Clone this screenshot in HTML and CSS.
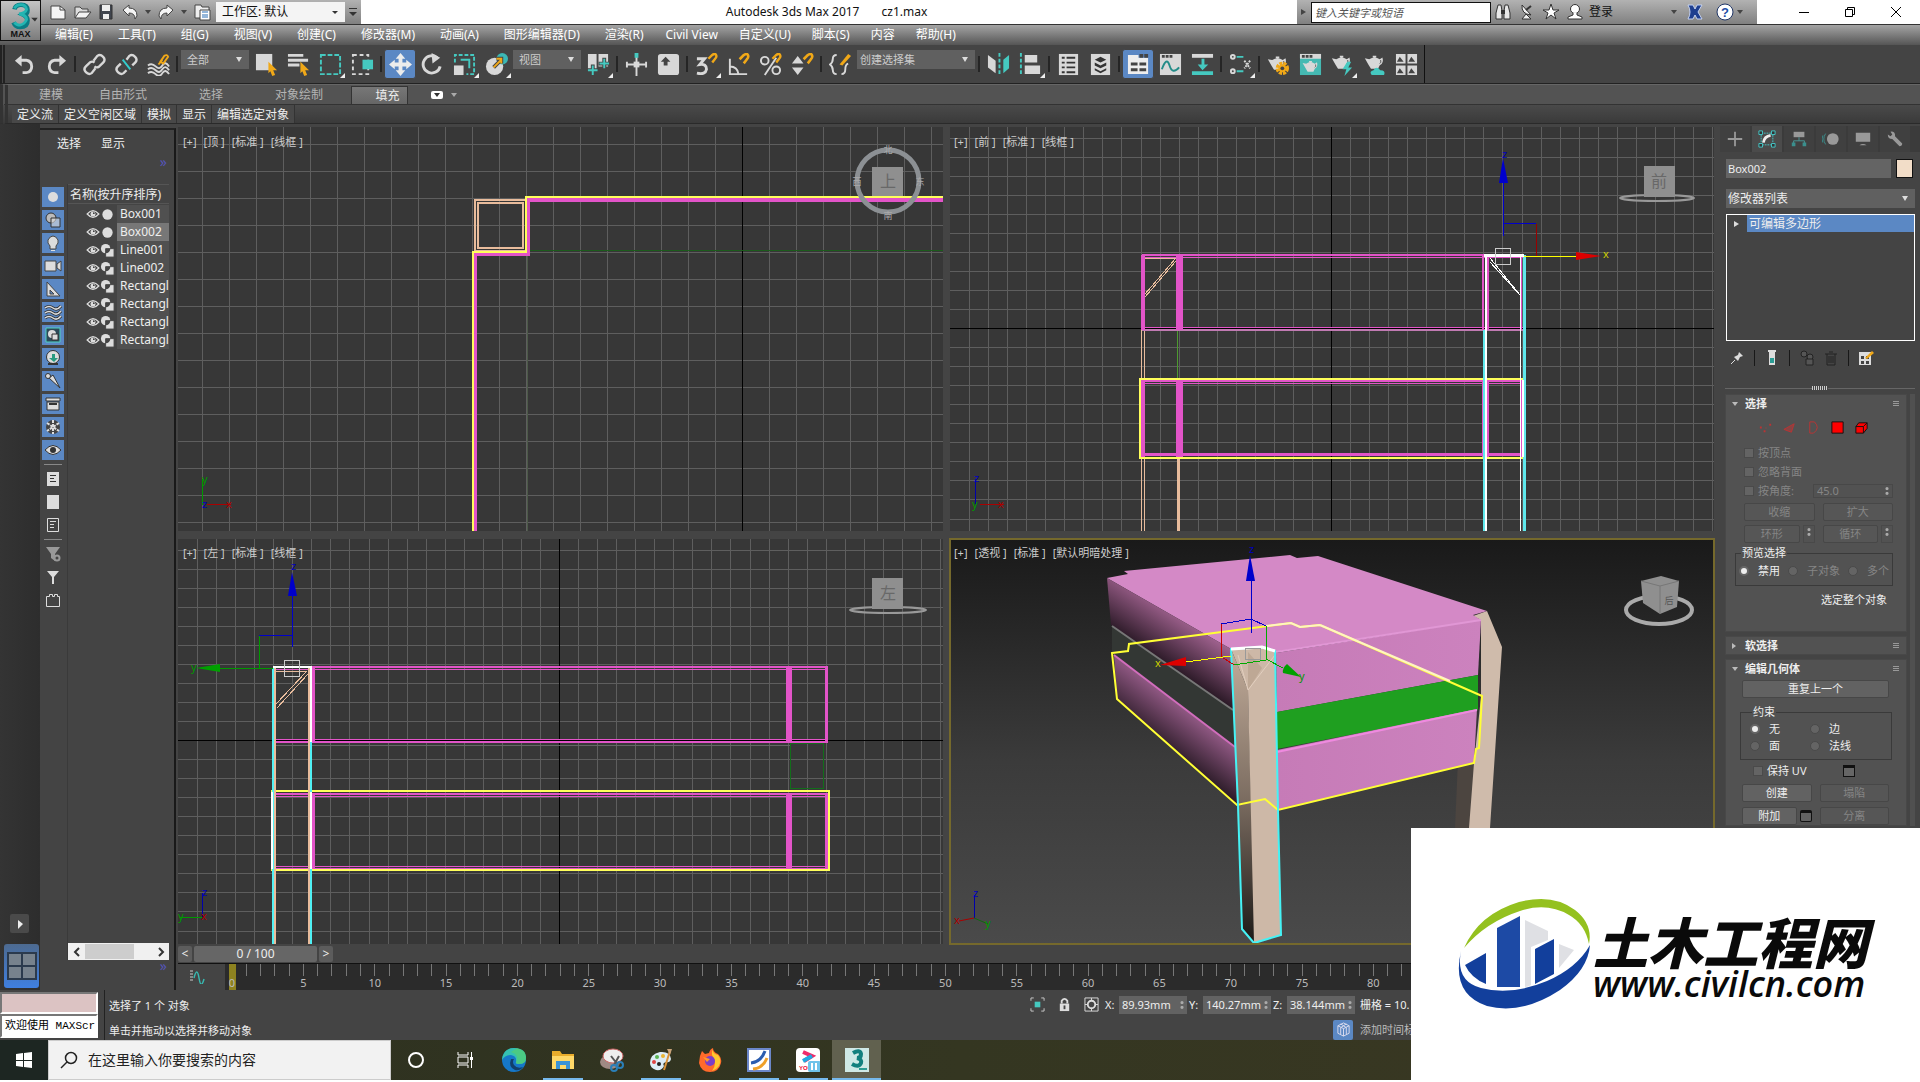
FILE: index.html
```html
<!DOCTYPE html>
<html lang="zh-CN">
<head>
	<meta charset="UTF-8">
	<meta name="viewport" content="width=device-width, initial-scale=1.0">
	<title>Autodesk 3ds Max 2017</title>
	<link rel="stylesheet" href="styles.css">
</head>
<body>
<!-- 公用图标 -->
<svg class="defs" width="0" height="0">
	<symbol id="eye" viewBox="0 0 16 12"><path d="M1 6Q8-2 15 6Q8 14 1 6z" fill="none" stroke="#ddd" stroke-width="1.5"/><circle cx="8" cy="6" r="3" fill="#ddd"/><circle cx="9" cy="5" r="1" fill="#333"/></symbol>
	<symbol id="geo" viewBox="0 0 16 16"><circle cx="8" cy="8" r="5.500" fill="#ddd"/></symbol>
	<symbol id="shape" viewBox="0 0 16 16"><circle cx="6" cy="6" r="5" fill="#ddd"/><path d="M6 6h9v9H6z" fill="#ddd" stroke="#444"/><path d="M6 6h5a5 5 0 0 1-5 5z" fill="#444"/></symbol>
	<symbol id="teapot" viewBox="0 0 24 24"><path d="M1 6l5 1q6-4 12 0l3-2q2 6-3 9l-2 4H8l-3-5zM10 3h4v2h-4z" fill="#d8d8d8"/><path d="M19 8q1 3-1 4" fill="none" stroke="#444"/></symbol>
	<symbol id="magnet" viewBox="0 0 12 12"><path d="M2 6l4-4q3-2 4 0t-1 4L6 10" fill="none" stroke="#f0a818" stroke-width="2.500"/></symbol>
</svg>

<div class="app">
	<header class="title-bar">
		<button class="app-button" aria-label="MAX">
			<svg width="40" height="42" viewBox="0 0 40 42"><path d="M13 9Q14 4 20 4q7 0 7 6 0 4-4 5 4 2 4 6 0 7-8 7-5 0-7-5" fill="none" stroke="#0b7c84" stroke-width="5"/><path d="M13 8Q15 4 20 4q5 0 6 5-1 4-8 5 8 1 8 6-2 5-7 6-4 0-6-3" fill="none" stroke="#23b5b2" stroke-width="3"/><path d="M31 18h7l-3 4z" fill="#333"/></svg>
			<span>MAX</span>
		</button>
		<div class="quick-access">
			<button aria-label="新建"><svg width="20" height="20"><path d="M3 4h9l5 4v9H3z" fill="#f4f4f4" stroke="#444"/><path d="M12 4v4h5" fill="none" stroke="#444"/></svg></button>
			<button aria-label="打开"><svg width="20" height="20"><path d="M3 16V5h5l2 2h6v3" fill="#ddd" stroke="#444"/><path d="M3 16l4-6h12l-5 6z" fill="#f4f4f4" stroke="#444"/></svg></button>
			<button aria-label="保存"><svg width="20" height="20"><path d="M4 3h12v14H4z" fill="#40454e" stroke="#333"/><path d="M6 3h8v6H6zM7 12h6v5H7z" fill="#eee"/></svg></button>
			<button aria-label="撤消"><svg width="20" height="20"><path d="M3 8l6-5v3q8 0 8 8l-2 3q0-6-6-6v3z" fill="#f4f4f4" stroke="#444"/></svg></button>
			<i class="tri"></i>
			<button aria-label="重做"><svg width="20" height="20"><path d="M17 8l-6-5v3q-8 0-8 8l2 3q0-6 6-6v3z" fill="#f4f4f4" stroke="#444"/></svg></button>
			<i class="tri"></i>
			<button aria-label="项目"><svg width="20" height="20"><path d="M3 3h6l1 2h7v11H3z" fill="#eee" stroke="#444"/><path d="M8 8h10v10H8z" fill="#fff" stroke="#444"/><path d="M10 10h6M10 13h6M10 15h6" stroke="#2a6fb5"/></svg></button>
			<div class="drop workspace-drop"><select aria-label="工作区"><option>工作区: 默认</option></select></div>
			<button class="qa-more" aria-label="更多"><svg width="12" height="12"><path d="M2 2h8v1H2zM2 6h8l-4 4z" fill="#333"/></svg></button>
		</div>
		<h1 class="title"><span>Autodesk 3ds Max 2017</span><span>cz1.max</span></h1>
		<div class="info-center">
			<i class="tri-right"></i>
			<input type="text" aria-label="搜索" placeholder="键入关键字或短语">
			<button aria-label="查找"><svg width="20" height="20"><path d="M5 3h3l1 6v8H3v-6zM12 3h3l2 8v6h-6V9z" fill="#e8e8e8" stroke="#333"/><path d="M8 8h4v4H8z" fill="#333"/></svg></button>
			<button aria-label="通信"><svg width="20" height="20"><path d="M5 3q-1 9 9 10zM9 12l-4 5h9z" fill="#f2f2f2" stroke="#333"/><path d="M9 8l5-4" stroke="#333" stroke-width="2"/></svg></button>
			<button aria-label="收藏"><svg width="20" height="20"><path d="M10 2l2 6h6l-5 3 2 6-5-4-5 4 2-6-5-3h6z" fill="#fff" stroke="#333"/></svg></button>
			<button aria-label="用户"><svg width="20" height="20"><circle cx="10" cy="7" r="4.500" fill="#fff" stroke="#333"/><path d="M8 11v2l-5 2v2h14v-2l-5-2v-2" fill="#fff" stroke="#333"/></svg></button>
			<button class="sign-in">登录</button>
			<i class="tri"></i>
			<button class="exchange" aria-label="交换"><svg width="20" height="20"><path d="M3 3h5l2 4 2-4h5l-4 7 4 7h-5l-2-4-2 4H3q4-7 0-14z" fill="#1f3f8f" stroke="#c4d2f2"/></svg></button>
			<button aria-label="帮助"><svg width="20" height="20"><circle cx="10" cy="10" r="8" fill="#fff" stroke="#1f3566"/><text x="10" y="15" text-anchor="middle" class="help-mark">?</text></svg></button>
			<i class="tri"></i>
		</div>
		<div class="window-buttons">
			<button aria-label="最小化"><svg width="12" height="12"><path d="M1 6.500h10" stroke="#000"/></svg></button>
			<button aria-label="还原"><svg width="12" height="12"><path d="M1.500 3.500h7v7h-7zM3.500 3.500v-2h7v7h-2" fill="none" stroke="#000"/></svg></button>
			<button aria-label="关闭"><svg width="12" height="12"><path d="M1 1l10 10M11 1L1 11" stroke="#000"/></svg></button>
		</div>
	</header>

	<nav class="menu-bar">
		<div class="menu-group">
			<button>编辑(E)</button><button>工具(T)</button><button>组(G)</button><button>视图(V)</button><button>创建(C)</button><button>修改器(M)</button><button>动画(A)</button><button>图形编辑器(D)</button><button>渲染(R)</button>
		</div>
		<div class="menu-group menu-group-tight">
			<button>Civil View</button><button>自定义(U)</button><button>脚本(S)</button><button>内容</button><button>帮助(H)</button>
		</div>
	</nav>

	<!-- 主工具栏 -->
	<div class="main-toolbar">
		<div class="tools">
			<button aria-label="撤消"><svg viewBox="0 0 24 24"><path d="M2 8l7-6v4h5q7 1 7 8t-7 8h-4v-3h4q4-1 4-5t-4-5H9v5z" fill="#d8d8d8"/></svg></button>
			<button aria-label="重做"><svg viewBox="0 0 24 24"><path d="M22 8l-7-6v4h-5q-7 1-7 8t7 8h4v-3h-4q-4-1-4-5t4-5h5v5z" fill="#d8d8d8"/></svg></button>
			<i class="sep"></i>
			<button aria-label="链接"><svg viewBox="0 0 24 24"><g fill="none" stroke="#d8d8d8" stroke-width="2.500"><path d="M11 8l4-5q3-2 6 1t0 6l-4 4q-3 2-5 0"/><path d="M13 16l-4 5q-3 2-6-1t0-6l4-4q3-2 5 0"/></g></svg></button>
			<button aria-label="取消链接"><svg viewBox="0 0 24 24"><g fill="none" stroke="#d8d8d8" stroke-width="2.500"><path d="M12 7l3-4q3-2 6 1t0 6l-3 3"/><path d="M12 18l-3 3q-3 2-6-1t0-6l3-3"/></g><path d="M8 7l8 10" stroke="#3cc" stroke-width="2"/></svg></button>
			<button aria-label="绑定"><svg viewBox="0 0 24 24"><path d="M1 13q4-3 8 1t7-1 7 1M1 17q4-3 8 1t7-1 7 1M1 21q4-3 8 1t7-1 7 1" fill="none" stroke="#d8d8d8" stroke-width="2"/><path d="M14 9l4-6q3-2 4 1l-5 7zM12 12l4-5" fill="none" stroke="#f0a818" stroke-width="2"/></svg></button>
			<i class="sep"></i>
			<div class="drop filter-drop"><select aria-label="选择过滤器"><option>全部</option></select></div>
			<button aria-label="选择对象"><svg viewBox="0 0 24 24"><path d="M1 1h17v17H1z" fill="#d8d8d8"/><path d="M14 9l9 9h-4l2 5-3 1-2-5-2 2z" fill="#f0a818"/></svg></button>
			<button aria-label="按名称选择"><svg viewBox="0 0 24 24"><path d="M1 1h16v3H1zM1 6h21v3H1zM1 11h12v3H1z" fill="#d8d8d8"/><path d="M14 9l9 9h-4l2 5-3 1-2-5-2 2z" fill="#f0a818"/></svg></button>
			<button class="flyout" aria-label="矩形选择"><svg viewBox="0 0 24 24"><path d="M2 2h20v20H2z" fill="none" stroke="#45c9c0" stroke-width="2" stroke-dasharray="5 2"/></svg></button>
			<button aria-label="窗口/交叉"><svg viewBox="0 0 24 24"><path d="M2 2h16v20H2z" fill="none" stroke="#d8d8d8" stroke-width="2" stroke-dasharray="4 3"/><path d="M12 7h11v10H12z" fill="#45c9c0"/></svg></button>
			<i class="sep"></i>
			<button class="on" aria-label="移动"><svg viewBox="0 0 24 24"><path d="M12 0l5 6h-3v4h4V7l6 5-6 5v-3h-4v4h3l-5 6-5-6h3v-4H6v3l-6-5 6-5v3h4V6H7z" fill="#ececec"/></svg></button>
			<button aria-label="旋转"><svg viewBox="0 0 24 24"><path d="M17 5a9 9 0 1 0 3 9" fill="none" stroke="#d8d8d8" stroke-width="3"/><path d="M11 0l9 5-8 6z" fill="#d8d8d8"/></svg></button>
			<button class="flyout" aria-label="缩放"><svg viewBox="0 0 24 24"><path d="M2 10V2h20v20h-8" fill="none" stroke="#45c9c0" stroke-width="2" stroke-dasharray="4 2"/><path d="M1 13h10v10H1z" fill="#d8d8d8"/><path d="M8 7h9v9" fill="none" stroke="#45c9c0" stroke-width="2"/></svg></button>
			<button class="flyout" aria-label="放置"><svg viewBox="0 0 24 24"><circle cx="10" cy="14" r="9" fill="#d8d8d8"/><circle cx="18" cy="6" r="6" fill="#3bb8b5"/><path d="M9 15l8-8M12 6h5v5" fill="none" stroke="#444" stroke-width="4"/><path d="M9 15l8-8M12 6h5v5" fill="none" stroke="#f0a818" stroke-width="2"/></svg></button>
			<div class="drop filter-drop"><select aria-label="参考坐标系"><option>视图</option></select></div>
			<button class="flyout" aria-label="轴点"><svg viewBox="0 0 24 24"><path d="M1 1h9v16H1zM12 1h10v13H12z" fill="#d8d8d8"/><path d="M6 12v12M0 18h12M18 5v12M12 11h12" stroke="#444" stroke-width="4"/><path d="M6 13v10M1 18h10M18 6v10M13 11h10" stroke="#45c9c0" stroke-width="2"/></svg></button>
			<i class="sep"></i>
			<button aria-label="操纵"><svg viewBox="0 0 24 24"><path d="M12 4v20M1 12h22M2 9v6M22 9v6" stroke="#d8d8d8" stroke-width="2"/><path d="M9 9h6v6H9z" fill="#d8d8d8"/><path d="M10 0h4v5h-4z" fill="#45c9c0"/></svg></button>
			<button aria-label="键盘快捷键"><svg viewBox="0 0 24 24"><rect x="1" y="1" width="22" height="22" rx="3" fill="#d8d8d8"/><path d="M9 4l5 5h-3v4H7V9H4z" fill="#444"/></svg></button>
			<i class="sep"></i>
			<button class="flyout" aria-label="捕捉开关"><svg viewBox="0 0 24 24"><path d="M2 6h8l-5 6q7-1 7 5-1 6-10 4" fill="none" stroke="#d8d8d8" stroke-width="3"/><use href="#magnet" x="12" width="12" height="12"/></svg></button>
			<button aria-label="角度捕捉"><svg viewBox="0 0 24 24"><path d="M3 6v16h18M3 14q8 0 9 8" fill="none" stroke="#d8d8d8" stroke-width="2"/><use href="#magnet" x="11" width="13" height="13"/></svg></button>
			<button aria-label="百分比捕捉"><svg viewBox="0 0 24 24"><circle cx="6" cy="8" r="4" fill="none" stroke="#d8d8d8" stroke-width="2"/><circle cx="18" cy="18" r="4" fill="none" stroke="#d8d8d8" stroke-width="2"/><path d="M18 5L6 23" stroke="#d8d8d8" stroke-width="2"/><use href="#magnet" x="12" width="12" height="12"/></svg></button>
			<button aria-label="微调器捕捉"><svg viewBox="0 0 24 24"><path d="M1 11l6-8 6 8zM1 15h12l-6 8z" fill="#d8d8d8"/><use href="#magnet" x="11" width="13" height="13"/></svg></button>
			<i class="sep"></i>
			<button aria-label="编辑命名选择集"><svg viewBox="0 0 24 24"><path d="M8 2q-4 0-4 4t-3 6q3 2 3 6t4 4M13 22q4 0 4-5t3-6" fill="none" stroke="#d8d8d8" stroke-width="2"/><path d="M11 12l9-11 3 2-9 10z" fill="#f0a818"/></svg></button>
			<div class="drop set-drop"><select aria-label="命名选择集"><option>创建选择集</option></select></div>
			<i class="sep"></i>
			<button aria-label="镜像"><svg viewBox="0 0 24 24"><path d="M1 2l8 6v13l-8-6z" fill="#d8d8d8"/><path d="M23 2l-6 5v14l6-5z" fill="#45c9c0"/><path d="M13 0v24" stroke="#45c9c0" stroke-width="2" stroke-dasharray="4 2"/></svg></button>
			<button class="flyout" aria-label="对齐"><svg viewBox="0 0 24 24"><path d="M2 0v24" stroke="#45c9c0" stroke-width="2" stroke-dasharray="4 2"/><path d="M6 2h13v8H6zM6 13h16v9H6z" fill="#d8d8d8"/></svg></button>
			<i class="sep"></i>
			<button aria-label="场景资源管理器"><svg viewBox="0 0 24 24"><path d="M2 1h20v22H2z" fill="#d8d8d8"/><path d="M5 5h3M10 5h9M5 10h3M10 10h9M5 15h3M10 15h9M5 20h3M10 20h9" stroke="#333" stroke-width="2"/></svg></button>
			<button aria-label="层资源管理器"><svg viewBox="0 0 24 24"><path d="M2 1h20v22H2z" fill="#d8d8d8"/><path d="M12 4l6 3-6 3-6-3zM6 10l6 3 6-3v3l-6 3-6-3zM6 16l6 3 6-3v2l-6 3-6-3z" fill="#333"/></svg></button>
			<i class="sep"></i>
			<button class="on" aria-label="功能区"><svg viewBox="0 0 24 24"><path d="M1 2h11v3h10v17H1z" fill="#eee"/><path d="M13 1h4v4h-4zM18 1h4v4h-4zM4 10h7v3H4zM13 10h7v3h-7zM4 16h7v3H4zM13 16h7v3h-7z" fill="#444"/></svg></button>
			<button aria-label="曲线编辑器"><svg viewBox="0 0 24 24"><path d="M1 1h22v22H1z" fill="#d8d8d8"/><path d="M3 2h3v3H3zM7 2h3v3H7zM11 2h3v3h-3z" fill="#444"/><path d="M3 17q5-14 8-4t10 2" fill="none" stroke="#248c88" stroke-width="2"/></svg></button>
			<button aria-label="图解视图"><svg viewBox="0 0 24 24"><path d="M1 1h22v4H1z" fill="#d8d8d8"/><path d="M1 19h22v4H1zM11 6h3v6h4l-6 6-5-6h4z" fill="#45c9c0"/></svg></button>
			<i class="sep"></i>
			<button class="flyout" aria-label="材质编辑器"><svg viewBox="0 0 24 24"><path d="M8 4h7M8 19h7" fill="none" stroke="#45c9c0" stroke-width="2"/><g fill="none" stroke="#d8d8d8" stroke-width="2"><circle cx="4" cy="4" r="2"/><circle cx="4" cy="19" r="2"/></g><path d="M16 8l6 8M22 8l-6 8" stroke="#d8d8d8" stroke-width="2" stroke-dasharray="2 1"/></svg></button>
			<i class="sep"></i>
			<button aria-label="渲染设置"><svg viewBox="0 0 24 24"><use href="#teapot" width="22" height="24"/><circle cx="16" cy="16" r="5" fill="none" stroke="#f0a818" stroke-width="4" stroke-dasharray="3 1"/><circle cx="16" cy="16" r="4" fill="#f0a818"/><circle cx="16" cy="16" r="2" fill="#444"/></svg></button>
			<button aria-label="渲染帧窗口"><svg viewBox="0 0 24 24"><path d="M1 1h22v22H1z" fill="#45b9b2"/><path d="M1 1h22v5H1z" fill="#d8d8d8"/><path d="M3 2h3v3H3zM7 2h3v3H7zM11 2h3v3h-3z" fill="#444"/><use href="#teapot" x="2" y="6" width="20" height="18"/></svg></button>
			<button class="flyout" aria-label="渲染产品"><svg viewBox="0 0 24 24"><use href="#teapot" width="22" height="22"/><path d="M17 9l-5 8h4l-2 7 8-9h-4l3-6z" fill="#45c9c0"/></svg></button>
			<button aria-label="云渲染"><svg viewBox="0 0 24 24"><use href="#teapot" width="24" height="22"/><path d="M9 23q-3-4 2-5 3-5 7 0 6 0 4 5z" fill="#45c9c0"/></svg></button>
			<button aria-label="A360 库"><svg viewBox="0 0 24 24"><path d="M1 1h10v10H1zM13 1h10v10H13zM1 13h10v10H1zM13 13h10v10H13z" fill="#d8d8d8"/><path d="M2 9l3-5 4 5zM14 9l3-5 4 5zM2 21l3-5 4 5zM14 21l3-5 4 5z" fill="#444"/></svg></button>
		</div>
	</div>

	<!-- 功能区 -->
	<div class="ribbon-tabs">
		<button>建模</button><button>自由形式</button><button>选择</button><button>对象绘制</button><button class="current">填充</button>
		<button class="ribbon-toggle" aria-label="最小化功能区"><svg width="12" height="8"><rect width="12" height="8" rx="2" fill="#fff"/><path d="M3 2h6L6 6z" fill="#333"/></svg></button>
		<i class="tri light"></i>
	</div>
	<div class="ribbon-panels">
		<button>定义流</button><button>定义空闲区域</button><button>模拟</button><button>显示</button><button>编辑选定对象</button>
	</div>

	<main class="workspace">
		<aside class="dock">
			<button class="dock-play" aria-label="展开"><svg width="18" height="18"><path d="M7 5l5 4-5 5z" fill="#eee"/></svg></button>
			<button class="dock-layout" aria-label="视口布局"><svg width="30" height="28"><path d="M1 1h28v26H1zM15 1v26M1 14h28" fill="#77828d" stroke="#2b3a4d" stroke-width="2"/></svg></button>
		</aside>

		<section class="explorer">
			<div class="explorer-menu"><button>选择</button><button>显示</button></div>
			<div class="more">»</div>
			<div class="explorer-body">
				<div class="filters">
					<button class="on" aria-label="几何体"><svg viewBox="0 0 18 18"><circle cx="9" cy="9" r="5" fill="#ddd"/></svg></button>
					<button class="on" aria-label="图形"><svg viewBox="0 0 18 18"><circle cx="7" cy="7" r="5" fill="#bbb" stroke="#333"/><path d="M7 7h9v9H7z" fill="#ddd" fill-opacity=".6" stroke="#333"/></svg></button>
					<button class="on" aria-label="灯光"><svg viewBox="0 0 18 18"><path d="M6 12q-3-3-2-6 2-4 5-4t5 4q1 3-2 6v3H6z" fill="#ddd" stroke="#444"/><path d="M7 16.500h4" stroke="#ddd"/></svg></button>
					<button class="on" aria-label="摄影机"><svg viewBox="0 0 18 18"><path d="M1 4h11v10H1zM13 7l4-3v10l-4-3z" fill="#ddd" stroke="#444"/></svg></button>
					<button class="on" aria-label="辅助对象"><svg viewBox="0 0 18 18"><path d="M3 2l13 14H3z" fill="#ddd" stroke="#444"/><path d="M6 10l4 4H6z" fill="#5b88c4" stroke="#444"/></svg></button>
					<button class="on" aria-label="空间扭曲"><svg viewBox="0 0 18 18"><path d="M1 5q4-3 8 0t8-2M1 10q4-3 8 0t8-2M1 15q4-3 8 0t8-2" fill="none" stroke="#333" stroke-width="3"/><path d="M1 5q4-3 8 0t8-2M1 10q4-3 8 0t8-2M1 15q4-3 8 0t8-2" fill="none" stroke="#ddd" stroke-width="1.500"/></svg></button>
					<button class="on" aria-label="组"><svg viewBox="0 0 18 18"><path d="M2 2h14v14H2z" fill="#2d4a58" stroke="#50d0c0"/><circle cx="8" cy="8" r="4" fill="#ddd"/><path d="M8 8h6v6H8z" fill="#ddd" stroke="#333"/></svg></button>
					<button class="on" aria-label="外部参照"><svg viewBox="0 0 18 18"><circle cx="9" cy="8" r="6.500" fill="#ddd" stroke="#333"/><path d="M8 5h3v4h3l-4 4-5-4h3z" fill="#2a9a80"/><path d="M4 15h10" stroke="#333" stroke-width="2"/></svg></button>
					<button class="on" aria-label="骨骼"><svg viewBox="0 0 18 18"><path d="M5 6l4-3 7 13z" fill="#ddd" stroke="#333"/><circle cx="4" cy="4" r="2.500" fill="#ddd" stroke="#333"/></svg></button>
					<button class="on" aria-label="容器"><svg viewBox="0 0 18 18"><path d="M2 3h14v3H2zM3 7h12v8H3z" fill="#ddd" stroke="#333"/><path d="M5 9h8" stroke="#333" stroke-width="2"/></svg></button>
					<button class="on" aria-label="冻结"><svg viewBox="0 0 18 18"><circle cx="9" cy="9" r="7" fill="#444"/><path d="M9 2v14M3 5l12 8M15 5L3 13" stroke="#ddd" stroke-width="2" stroke-dasharray="3 1"/></svg></button>
					<button class="on" aria-label="隐藏"><svg viewBox="0 0 18 18"><path d="M1 9q8-9 16 0-8 9-16 0z" fill="#ddd" stroke="#333"/><circle cx="9" cy="9" r="3" fill="#333"/></svg></button>
					<hr>
					<button aria-label="全部"><svg viewBox="0 0 18 18"><path d="M3 2h12v14H3z" fill="#ddd"/><path d="M6 5.500h6M6 8.500h4M6 11.500h6" stroke="#333"/></svg></button>
					<button aria-label="无"><svg viewBox="0 0 18 18"><path d="M3 2h12v14H3z" fill="#ddd"/></svg></button>
					<button aria-label="反转"><svg viewBox="0 0 18 18"><path d="M3.500 2.500h11v13h-11zM6 5.500h6M6 8.500h4M6 11.500h4" fill="none" stroke="#ddd"/></svg></button>
					<hr>
					<button aria-label="过滤设置"><svg viewBox="0 0 18 18"><path d="M2 2h14l-5 7v7l-4-3V9z" fill="#999"/><circle cx="13" cy="13" r="2.500" fill="#444" stroke="#999" stroke-width="2"/></svg></button>
					<button aria-label="过滤"><svg viewBox="0 0 18 18"><path d="M3 3h12l-5 6v7H8V9z" fill="#ddd"/></svg></button>
					<button aria-label="组合过滤"><svg viewBox="0 0 18 18"><path d="M2.500 5.500h3v-2h3v2h2v-2h3v2h2v10h-13z" fill="none" stroke="#ddd"/></svg></button>
				</div>
				<div class="tree">
					<div class="tree-head">名称(按升序排序)</div>
					<ul id="tree-list"></ul>
					<div class="h-scroll">
						<button aria-label="向左"><svg width="8" height="10"><path d="M6 1L2 5l4 4" fill="none" stroke="#333" stroke-width="2"/></svg></button>
						<span></span>
						<button aria-label="向右"><svg width="8" height="10"><path d="M2 1l4 4-4 4" fill="none" stroke="#333" stroke-width="2"/></svg></button>
					</div>
				</div>
			</div>
			<div class="more more-bottom">»</div>
		</section>

		<section class="center">
			<div class="viewports">
				<!-- 顶视图 -->
				<div class="viewport">
					<svg class="scene" viewBox="178 127 766 407" preserveAspectRatio="xMinYMin slice">
						<path class="field" d="M178 127h765v404H178z"/>
						<path class="grid" data-box="178,127,943,531" data-origin="742,144" data-step="27"/>
						<path class="axis-line" d="M742.500 127v404"/>
						<g class="wire">
							<path d="M530 250h413" stroke="#1c5c1c"/><path d="M527 256v275" stroke="#4c5a48"/>
							<path d="M475 531V254h53v-54h415" stroke="#e254c8" stroke-width="4"/>
							<path d="M475 200h51v51h-51zM478 203h45v45h-45z" stroke="#e9bc9c" stroke-width="2"/>
							<path d="M473 531V252h53v-55h417" stroke="#ffff5a" stroke-width="2"/>
						</g>
						<g class="cube"><circle cx="888" cy="181" r="31" fill="none" stroke="#8c9094" stroke-width="5"/><path d="M872 167h31v29h-31z"/><text x="888" y="187">上</text><text x="888" y="153" class="compass">北</text><text x="888" y="219" class="compass">南</text><text x="857" y="185" class="compass">西</text><text x="920" y="185" class="compass">东</text></g>
						<path d="M202.500 505v-26" stroke="#090"/><path d="M207 504.500h24" stroke="#a00"/>
						<text class="ax g" x="202" y="483">y</text><text class="ax r" x="226" y="508">x</text><text class="ax b" x="202" y="508">z</text>
					</svg>
					<div class="vp-label"><button>[+]</button><button>[顶 ]</button><button>[标准 ]</button><button>[线框 ]</button></div>
				</div>
				<!-- 前视图 -->
				<div class="viewport">
					<svg class="scene" viewBox="949 127 766 407" preserveAspectRatio="xMinYMin slice">
						<path class="field" d="M950 127h764v404H950z"/>
						<path class="grid" data-box="950,127,1714,531" data-origin="1331,328" data-step="19.050"/>
						<path class="axis-line" d="M1331.500 127v404M950 328.500h764"/>
						<g class="wire">
							<path d="M1141.500 330v201M1144.500 330v201" stroke="#e9bc9c"/><path d="M1178 458v73" stroke="#e9bc9c" stroke-width="3"/>
							<path d="M1177.500 330v48" stroke="#4d9a30"/>
							<path d="M1145 258h31l-31 36M1176 261l-31 36" stroke="#e9bc9c"/>
							<path d="M1142 255h381M1142 381h381M1142 455h381" stroke="#e254c8" stroke-width="2"/>
							<path d="M1142 257.500h381M1142 327.500h381M1142 383.500h381M1142 453.500h381" stroke="#e254c8"/>
							<path d="M1142 330h381" stroke="#c07ab2" stroke-width="2"/>
							<path d="M1143 255v75M1143 380v77" stroke="#e254c8" stroke-width="4"/>
							<path d="M1179 255v75M1179 380v77" stroke="#e254c8" stroke-width="7"/>
							<path d="M1483 255v75M1483 380v77M1521 255v75M1521 380v77M1488 255v75M1488 380v77" stroke="#e254c8" stroke-width="2"/>
							<path d="M1140 379h383v79h-383z" stroke="#ffff5a" stroke-width="2"/>
							<path d="M1484 330v201M1524 255v276" stroke="#5fe8ec" stroke-width="3"/>
							<path d="M1486 255v276" stroke="#fff" stroke-width="2"/><path d="M1520.500 255v276" stroke="#fff"/><path d="M1523 380v77" stroke="#fff" stroke-width="2"/>
							<path d="M1484 255h40" stroke="#fff" stroke-width="3"/>
							<path d="M1490 258l30 37M1490 262l30 33" stroke="#fff"/>
							<path d="M1495.500 248.500h15v16h-15z" stroke="#ccc"/>
							<path d="M1503.500 236v-60M1503 223.500h33" stroke="#00c"/><path d="M1536.500 224v32" stroke="#900"/><path d="M1524 256.500h52" stroke="#ff0"/>
						</g>
						<path d="M1503 158l5 25h-9z" fill="#00c"/><path d="M1601 256l-25-4v8z" fill="#d00"/>
						<text class="ax b" x="1502" y="158">z</text><text class="ax y" x="1603" y="258">x</text>
						<g class="cube"><ellipse cx="1657" cy="198" rx="37" ry="3" fill="none" stroke="#999" stroke-width="2"/><path d="M1644 166h31v31h-31z"/><text x="1659" y="187">前</text></g>
						<path d="M975.500 504v-25" stroke="#00a"/><path d="M980 504.500h24" stroke="#a00"/><text class="ax b" x="974" y="482">z</text><text class="ax r" x="998" y="508">x</text><text class="ax g" x="972" y="508">y</text>
					</svg>
					<div class="vp-label"><button>[+]</button><button>[前 ]</button><button>[标准 ]</button><button>[线框 ]</button></div>
				</div>
				<!-- 左视图 -->
				<div class="viewport">
					<svg class="scene" viewBox="178 538 766 407" preserveAspectRatio="xMinYMin slice">
						<path class="field" d="M178 539h765v405H178z"/>
						<path class="grid" data-box="178,539,943,944" data-origin="559,740" data-step="19.050"/>
						<path class="axis-line" d="M559.500 539v405M178 740.500h765"/>
						<g class="wire">
							<path d="M790 743h33v45h-33z" stroke="#126e1a"/><path d="M276 745.500h514" stroke="#666"/>
							<path d="M274 667h553v75H274M274 794h553v75H274" stroke="#e254c8" stroke-width="2"/>
							<path d="M274 669.500h553M274 739.500h553M274 796.500h553M274 866.500h553" stroke="#e254c8"/>
							<path d="M826 667v75M826 793v76M313 667v75M313 793v76" stroke="#e254c8" stroke-width="3"/>
							<path d="M789 667v75M789 793v76" stroke="#e254c8" stroke-width="6"/>
							<path d="M273 791h556v79H272v-79z" stroke="#ffff5a" stroke-width="2"/>
							<path d="M273 668v276M311 742v202" stroke="#4ff0f4" stroke-width="2"/>
							<path d="M275 668v276M309 668v276" stroke="#e9bc9c" stroke-width="2"/>
							<path d="M273 667h38v75M272 792v77M311 792v77" stroke="#fff" stroke-width="2"/>
							<path d="M276 671h31l-31 33M308 674l-31 34" stroke="#e9bc9c"/>
							<path d="M284.500 660.500h15v16h-15z" stroke="#ccc"/>
							<path d="M292.500 647v-58M292 635.500h-33" stroke="#00c"/><path d="M259.500 636v32M273 668.500h-53" stroke="#090"/>
						</g>
						<path d="M292 572l5 24h-9z" fill="#00c"/><path d="M196 668l24-4v8z" fill="#00a000"/>
						<text class="ax b" x="291" y="570">z</text><text class="ax g" x="191" y="671">y</text>
						<g class="cube"><ellipse cx="888" cy="610" rx="38" ry="3" fill="none" stroke="#999" stroke-width="2"/><path d="M872 578h31v31h-31z"/><text x="888" y="599">左</text></g>
						<path d="M202.500 917v-24" stroke="#00a"/><path d="M180 917.500h22" stroke="#090"/><text class="ax b" x="202" y="896">z</text><text class="ax g" x="178" y="920">y</text><text class="ax r" x="201" y="920">x</text>
					</svg>
					<div class="vp-label"><button>[+]</button><button>[左 ]</button><button>[标准 ]</button><button>[线框 ]</button></div>
				</div>
				<!-- 透视图 -->
				<div class="viewport">
					<svg class="scene" viewBox="949 538 766 407" preserveAspectRatio="xMinYMin slice">
						<defs>
							<linearGradient id="sky" x2="0" y2="1"><stop stop-color="#191919"/><stop offset=".55" stop-color="#3b3b3b"/><stop offset="1" stop-color="#4a4a4a"/></linearGradient>
							<linearGradient id="side" gradientUnits="userSpaceOnUse" x1="1175" y1="612" x2="1143" y2="660"><stop stop-color="#a0628f"/><stop offset="1" stop-color="#150c13"/></linearGradient>
							<linearGradient id="side2" gradientUnits="userSpaceOnUse" x1="1190" y1="706" x2="1155" y2="752"><stop stop-color="#9d608f"/><stop offset="1" stop-color="#181016"/></linearGradient>
							<linearGradient id="front" x2="1" y2="0"><stop stop-color="#c67bb7"/><stop offset="1" stop-color="#cc82be"/></linearGradient>
							<linearGradient id="leg" x2="0" y2="1"><stop stop-color="#c2ac9a"/><stop offset=".5" stop-color="#7d6e62"/><stop offset="1" stop-color="#1c1917"/></linearGradient>
						</defs>
						<path d="M949 538h766v407H949z" fill="url(#sky)"/>
						<path d="M1458 760h18l-6 68h-15z" fill="#4c4540"/>
						<path d="M1473 616l14-5 15 36-12 181h-21l5-65 7-66V620z" fill="#cfbbab"/>
						<path d="M1107 578l21-4-4-3 166-16 7 3 21-2 169 55-14 4 8 5-207 32-13-5-30 2z" fill="#d489c6"/>
						<path d="M1107 578l124 71 3 61-123-85z" fill="url(#side)"/>
						<path d="M1112 626l121 84 3 37-121-92-3-1z" fill="#333734"/><path d="M1112 626l121 84" stroke="#777" fill="none" stroke-width="2"/>
						<path d="M1114 655l121 92 3 58-121-105z" fill="url(#side2)"/><path d="M1114 655l121 92" stroke="#d16dbc" stroke-width="2"/>
						<path d="M1276 653l205-33-3 55-201 37z" fill="url(#front)"/><path d="M1276 652l205-32" stroke="#e197d5" stroke-width="2"/>
						<path d="M1277 712l201-37v35l-201 39z" fill="#1f9f20"/>
						<path d="M1277 750l200-41-3 54-197 47z" fill="url(#front)"/><path d="M1277 752l200-42" stroke="#ef8adf" stroke-width="2"/>
						<path d="M1231 649l17 41 7 253-13-14z" fill="url(#leg)"/>
						<path d="M1231 649l31-2 13 4 6 284-27 8-6-253z" fill="#cdb8a7"/>
						<path d="M1262 668l-14 22v-38z" fill="#bea895"/><path d="M1275 655l-27 35-10-35" fill="none" stroke="#e2cfbf"/>
						<path d="M1112 653l16-2 1-7 162-21 9 4 20-2 162 71-3 52-3 1-2 14-196 47-13-11-28 6-120-106z" fill="none" stroke="#ffff35" stroke-width="2"/>
						<path d="M1320 625l130 56M1266 626l25-3 9 4 20-2" fill="none" stroke="#fff5c0" stroke-width="2"/>
						<path d="M1231 649l31-2 13 4 3 159 3 125-27 8-12-14-4-124z" fill="none" stroke="#45f2f5" stroke-width="2"/>
						<path d="M1231 649l31-2 13 4" fill="none" stroke="#fff" stroke-width="3"/>
						<g class="wire">
							<path d="M1245 648h15v11h-15z" stroke="#999"/>
							<path d="M1251.500 633v-60M1221 624l30-5 15 7" stroke="#00c"/><path d="M1221.500 624v33l13 8" stroke="#c00"/><path d="M1266.500 626v33M1266 660l-32 5M1266 659l17 9" stroke="#0a0"/>
							<path d="M1231 656l-45 6" stroke="#ff0"/>
						</g>
						<path d="M1250 555l5 26h-9z" fill="#00c"/><path d="M1160 665l26-8v9z" fill="#d00"/><path d="M1301 677l-14-13q-5 4-4 9z" fill="#00a000"/>
						<text class="ax b" x="1249" y="553">z</text><text class="ax y" x="1155" y="667">x</text><text class="ax g" x="1299" y="680">y</text>
						<g class="cube"><ellipse cx="1659" cy="610" rx="33" ry="14" fill="none" stroke="#aaa" stroke-width="4"/><path d="M1641 581l20-5 18 5-2 26-17 7-17-11z"/><path d="M1641 581l19 5 19-5M1660 586v27" fill="none" stroke="#777"/><text x="1669" y="604" class="compass back">后</text></g>
						<path d="M974.500 918v-23" stroke="#00a"/><path d="M974 918l-15 3" stroke="#a00"/><path d="M974 918l14 6" stroke="#161"/><text class="ax b" x="973" y="897">z</text><text class="ax r" x="954" y="924">x</text><text class="ax g" x="985" y="927">y</text>
						<path d="M950 539h764v405H950z" fill="none" stroke="#75692c" stroke-width="2"/>
					</svg>
					<div class="vp-label"><button>[+]</button><button>[透视 ]</button><button>[标准 ]</button><button>[默认明暗处理 ]</button></div>
				</div>
			</div>
			<div class="time-slider">
				<button aria-label="上一帧">&lt;</button><button class="frame">0 / 100</button><button aria-label="下一帧">&gt;</button>
			</div>
			<div class="track-bar">
				<button class="mini-curve" aria-label="迷你曲线编辑器"><svg width="16" height="14"><path d="M1 1h3M1 4h3M1 7h3M1 10h3" stroke="#ccc"/><path d="M5 8q3-12 5 0t5 1" fill="none" stroke="#38b8b0" stroke-width="1.500"/></svg></button>
				<div class="ruler" id="ruler"></div>
			</div>
		</section>

		<!-- 命令面板 -->
		<aside class="panel">
			<div class="panel-tabs">
				<button aria-label="创建"><svg viewBox="0 0 20 20"><path d="M10 2v16M2 10h16" stroke="#999" stroke-width="2"/></svg></button>
				<button class="current" aria-label="修改"><svg viewBox="0 0 20 20"><path d="M3.500 3.500h13v13h-13z" fill="none" stroke="#4cc" stroke-dasharray="2 1"/><path d="M1 1h4v4H1zM15 1h4v4h-4zM1 15h4v4H1zM15 15h4v4h-4z" fill="#333" stroke="#4cc"/><path d="M6 14q1-7 8-8" fill="none" stroke="#eee" stroke-width="3"/></svg></button>
				<button aria-label="层次"><svg viewBox="0 0 20 20"><path d="M4 2h12v6H4z" fill="#999"/><path d="M10 8v4M4 15v-3h12v3" fill="none" stroke="#4a9a98"/><path d="M2 14h4v4H2zM14 14h4v4h-4z" fill="#3a8f8d"/></svg></button>
				<button aria-label="运动"><svg viewBox="0 0 20 20"><circle cx="12" cy="10" r="6.500" fill="#999"/><path d="M4 4q-4 6 0 12M1 6q-2 4 0 8" fill="none" stroke="#3a8f8d"/></svg></button>
				<button aria-label="显示"><svg viewBox="0 0 20 20"><path d="M2 3h16v10H2zM6 17q4-3 8 0z" fill="#999"/></svg></button>
				<button aria-label="实用程序"><svg viewBox="0 0 20 20"><path d="M2 5l3 2 2-2-2-3q4-1 5 3v2l8 8q0 3-3 3l-8-8q-5 0-5-5z" fill="#999"/></svg></button>
			</div>
			<div class="name-row"><input type="text" aria-label="对象名称" value="Box002"><button class="swatch" aria-label="对象颜色"></button></div>
			<div class="drop mod-drop"><select aria-label="修改器列表"><option>修改器列表</option></select></div>
			<div class="stack"><button class="stack-item"><i class="tri-right light"></i><span>可编辑多边形</span></button></div>
			<div class="stack-tools">
				<button aria-label="锁定堆栈"><svg viewBox="0 0 16 16"><path d="M2 14l4-4" stroke="#ddd"/><path d="M10 2l4 4-3 1-2 4-4-4 4-2z" fill="#ddd"/></svg></button><i></i>
				<button aria-label="显示最终结果"><svg viewBox="0 0 16 16"><path d="M4 1h8M6 1v13h4V1" fill="#ddd" stroke="#ddd" stroke-width="2"/><path d="M6 8h4v5H6z" fill="#2b9d95"/></svg></button><i></i>
				<button disabled aria-label="使唯一"><svg viewBox="0 0 16 16"><g fill="#555" stroke="#222"><circle cx="5" cy="4" r="3"/><circle cx="11" cy="7" r="3"/><path d="M7 9h7v6H7z"/></g></svg></button>
				<button disabled aria-label="移除修改器"><svg viewBox="0 0 16 16"><path d="M2 4h12M4 4v11h8V4M6 2h4M6 6v7M8 6v7M10 6v7" fill="none" stroke="#222"/></svg></button><i></i>
				<button aria-label="配置修改器集"><svg viewBox="0 0 16 16"><path d="M1 2h12v13H1z" fill="#ddd"/><path d="M3 6h3v3H3zM8 6h3v3H8zM3 11h3v3H3zM8 11h3v3H8z" fill="#444"/><path d="M7 8l7-7 2 2-7 6z" fill="#f0a818"/></svg></button>
			</div>
			<div class="grip"><span></span></div>

			<div class="rollouts">
				<section class="rollout roll-select">
					<button class="roll-head open">选择</button>
					<div class="roll-body">
						<div class="sub-objects">
							<button aria-label="顶点"><svg viewBox="0 0 16 16"><path d="M2 7h2v2H2zM6 11h2v2H6zM12 4h2v2h-2zM8 8h1v1H8z" fill="#b33"/></svg></button>
							<button aria-label="边"><svg viewBox="0 0 16 16"><path d="M2 10l11-6-3 9z" fill="#844" stroke="#b33"/></svg></button>
							<button aria-label="边界"><svg viewBox="0 0 16 16"><path d="M4 2h5q3 3 3 6t-4 6H4z" fill="none" stroke="#b33"/></svg></button>
							<button aria-label="多边形"><svg viewBox="0 0 16 16"><path d="M2 2h12v12H2z" fill="#f00" stroke="#111"/></svg></button>
							<button aria-label="元素"><svg viewBox="0 0 16 16"><path d="M2 7l3-4h9v6l-4 5H2z" fill="#f00" stroke="#111"/><path d="M2 7h8v7M10 7l4-4" fill="none" stroke="#111"/></svg></button>
						</div>
						<div class="check-row"><label><input type="checkbox" disabled>按顶点</label></div>
						<div class="check-row"><label><input type="checkbox" disabled>忽略背面</label></div>
						<div class="check-row"><label><input type="checkbox" disabled>按角度:</label><span class="spin"><input type="text" aria-label="角度" value="45.0" disabled></span></div>
						<div class="pair"><button disabled>收缩</button><button disabled>扩大</button></div>
						<div class="pair"><span class="with-spin"><button disabled>环形</button><i class="spinner"></i></span><span class="with-spin"><button disabled>循环</button><i class="spinner"></i></span></div>
						<fieldset class="preview"><legend>预览选择</legend>
							<label><input type="radio" name="preview" checked>禁用</label><label class="off"><input type="radio" name="preview" disabled>子对象</label><label class="off"><input type="radio" name="preview" disabled>多个</label>
						</fieldset>
						<p class="sel-info">选定整个对象</p>
					</div>
				</section>
				<section class="rollout"><button class="roll-head">软选择</button></section>
				<section class="rollout roll-edit">
					<button class="roll-head open">编辑几何体</button>
					<div class="roll-body">
						<button class="wide">重复上一个</button>
						<fieldset class="constraints"><legend>约束</legend>
							<label><input type="radio" name="constraint" checked>无</label><label><input type="radio" name="constraint">边</label><label><input type="radio" name="constraint">面</label><label><input type="radio" name="constraint">法线</label>
						</fieldset>
						<div class="keep-uv"><label><input type="checkbox">保持 UV</label><button class="box-btn" aria-label="保持 UV 设置"></button></div>
						<div class="pair"><button>创建</button><button disabled>塌陷</button></div>
						<div class="pair"><span class="with-spin"><button>附加</button><button class="box-btn" aria-label="附加列表"></button></span><button disabled>分离</button></div>
					</div>
				</section>
			</div>
		</aside>
	</main>

	<footer class="status-bar">
		<div class="script-box"><div class="macro"></div><div class="listener">欢迎使用 MAXScr</div></div>
		<div class="messages"><p>选择了 1 个 对象</p><p>单击并拖动以选择并移动对象</p></div>
		<div class="coords">
			<div class="coord-row">
				<button aria-label="孤立"><svg viewBox="0 0 16 16"><path d="M5 5h6v6H5z" fill="#45c9c0"/><path d="M1 4V1h3M12 1h3v3M15 12v3h-3M4 15H1v-3" fill="none" stroke="#ccc"/></svg></button>
				<button aria-label="锁定选择"><svg viewBox="0 0 16 16"><path d="M3 7h10v8H3z" fill="#ddd"/><path d="M5 7V4q3-4 6 0v3" fill="none" stroke="#ddd" stroke-width="2"/><path d="M7 9h2v4H7z" fill="#444"/></svg></button>
				<button aria-label="绝对模式"><svg viewBox="0 0 16 16"><path d="M1 1h14v14H1zM8 1v14M1 8h14" fill="none" stroke="#ddd"/><circle cx="8" cy="8" r="4" fill="#444" stroke="#ddd" stroke-width="2"/></svg></button>
				<label>X:<span class="spin"><input type="text" value="89.93mm"></span></label>
				<label>Y:<span class="spin"><input type="text" value="140.27mm"></span></label>
				<label>Z:<span class="spin"><input type="text" value="38.144mm"></span></label>
				<span>栅格 = 10.</span>
			</div>
			<div class="tag-row"><button aria-label="自适应降级"><svg viewBox="0 0 16 16"><path d="M8 1l6 3v8l-6 3-6-3V4zM2 4l6 3 6-3M8 7v8M5 2l6 4v7M11 2L5 6v7" fill="none" stroke="#dde"/></svg></button><span>添加时间标</span></div>
		</div>
	</footer>

	<div class="task-bar">
		<button class="start" aria-label="开始"><svg width="16" height="16"><path d="M0 2l7-1v7H0zM8 1l8-1v8H8zM0 9h7v6l-7-1zM8 9h8v7l-8-1z" fill="#fff"/></svg></button>
		<label class="search"><svg width="18" height="18"><circle cx="11" cy="7" r="5.500" fill="none" stroke="#222" stroke-width="1.500"/><path d="M7 11l-6 6" stroke="#222" stroke-width="1.500"/></svg><input type="text" aria-label="搜索" placeholder="在这里输入你要搜索的内容"></label>
		<button aria-label="Cortana"><svg viewBox="0 0 24 24"><circle cx="12" cy="12" r="7" fill="none" stroke="#fff" stroke-width="2"/></svg></button>
		<button aria-label="任务视图"><svg viewBox="0 0 24 24"><path d="M5 4v3h10V4M5 20v-3h10v3M5 9h10v6H5zM18.500 4v16" fill="none" stroke="#fff"/><path d="M17 9h3v3h-3z" fill="#fff"/></svg></button>
		<button aria-label="Edge"><svg viewBox="0 0 24 24"><circle cx="12" cy="12" r="12" fill="#1678c8"/><path d="M0 12Q1 0 12 0q12 0 12 10 0 6-7 6-4 0-3-2 1-6-5-7-6 0-9 5z" fill="#35c1b1"/><path d="M15 0q9 2 9 10 0 6-7 6-3 0-3-2 4-7-5-10z" fill="#5ad065" opacity=".6"/><path d="M9 11q-3 8 4 11 5 1 8-3-6 2-9-2-2-3 0-6z" fill="#123f6b"/></svg></button>
		<button class="running" aria-label="文件资源管理器"><svg viewBox="0 0 24 24"><path d="M1 3h8l2 3h12v15H1z" fill="#e9ad2c"/><path d="M1 8h22v13H1z" fill="#ffd868"/><path d="M5 21v-8h14v8h-4v-4H9v4z" fill="#3a93d6"/></svg></button>
		<button aria-label="截图工具"><svg viewBox="0 0 24 24"><ellipse cx="10" cy="14" rx="10" ry="7" fill="#a08a84"/><ellipse cx="13" cy="8" rx="10" ry="7" fill="#eee" stroke="#c66"/><path d="M11 8l7 9M19 8l-5 9" stroke="#555" stroke-width="2"/><circle cx="14" cy="20" r="3" fill="none" stroke="#2b7fb8" stroke-width="2"/><circle cx="20" cy="17" r="3" fill="none" stroke="#2b7fb8" stroke-width="2"/></svg></button>
		<button class="running" aria-label="画图"><svg viewBox="0 0 24 24"><path d="M1 15Q1 6 11 4q10-1 11 7-1 4-5 3-4 1-2 4-2 5-8 4-6-2-6-7z" fill="#dcecf6"/><circle cx="5" cy="14" r="2" fill="#d44"/><circle cx="8" cy="9" r="2" fill="#5ab552"/><circle cx="14" cy="8" r="2" fill="#e9b534"/><circle cx="10" cy="16" r="2" fill="#222"/><path d="M21 3l-6 19" stroke="#d9923a" stroke-width="2"/><path d="M18 1h5l-2 6z" fill="#c9a37a"/></svg></button>
		<button aria-label="Firefox"><svg viewBox="0 0 24 24"><path d="M2 8l2-5 3 3 4-1q1-4 4-5 0 4 5 6 4 4 3 9-2 9-11 9T1 15z" fill="#ff6a2b"/><path d="M14 1q1 5 6 6 4 5 1 11-3 4-7 5 6-8 0-16z" fill="#ffc82e"/><circle cx="12" cy="13" r="5" fill="#7b3fc8"/><path d="M5 9l7 2-3 3z" fill="#ff9a2b"/></svg></button>
		<button class="running" aria-label="看图"><svg viewBox="0 0 24 24"><path d="M1 1h22v22H1z" fill="#fff" stroke="#6b87c9" stroke-width="2"/><path d="M4 15Q14 14 18 3" fill="none" stroke="#2a5cae" stroke-width="3"/><path d="M6 21q10-1 14-11" fill="none" stroke="#efa02a" stroke-width="3"/></svg></button>
		<button class="running" aria-label="录屏"><svg viewBox="0 0 24 24"><rect width="24" height="24" rx="4" fill="#fff"/><path d="M7 4l9 4-8 5" fill="none" stroke="#ee2a6a" stroke-width="4"/><path d="M16 8l-9 5" stroke="#20a8e0" stroke-width="4"/><text x="3" y="22" class="you">YOU</text><rect x="12" y="13" width="13" height="11" rx="2" fill="#6ec3ea"/><path d="M16 15v7M20 15v7" stroke="#fff" stroke-width="2"/></svg></button>
		<button class="running active" aria-label="3ds Max"><svg viewBox="0 0 24 24"><path d="M0 0h24v24H0z" fill="#cfe9e6"/><path d="M8 5q7-4 8 1 0 4-4 4 5 1 4 5-2 5-9 1" fill="none" stroke="#12807e" stroke-width="4"/><path d="M14 21h8" stroke="#2d9d93" stroke-width="2"/></svg></button>
	</div>

	<!-- 站点标识 -->
	<div class="watermark">
		<svg width="136" height="116" viewBox="1458 896 136 116">
			<path d="M1465 948Q1480 914 1520 902q34-9 56 8 18 14 14 34-4-20-20-29-22-13-49-4-34 11-56 37z" fill="#94c11f"/>
			<path d="M1462 951q-6 30 20 37 30 8 66-7 30-13 43-36-2 25-30 45-38 25-73 16-36-12-26-55z" fill="#123f9c"/>
			<path d="M1526 920l23 11v9l-17 7v38q-3 2-6 2zM1560 944l15 6-15 18z" fill="#dfe0e4"/>
			<path d="M1498 928l23-12v71h-23z" fill="#1d4aa5"/>
			<path d="M1466 965l21-12v31q-15-6-21-19zM1536 949l19-10v35l-19 10z" fill="#123f9c"/>
		</svg>
		<div class="mark-text"><strong>土木工程网</strong><span>www.civilcn.com</span></div>
	</div>
</div>

<script>
    // 场景列表
    const objects = [
        ['Box001', 'geo'], ['Box002', 'geo'], ['Line001', 'shape'], ['Line002', 'shape'],
        ['Rectangl', 'shape'], ['Rectangl', 'shape'], ['Rectangl', 'shape'], ['Rectangl', 'shape']
    ];
    const treeList = document.getElementById('tree-list');
    objects.forEach(([name, type], i) => {
        const item = document.createElement('li');
        if (i === 1) item.className = 'selected';
        item.innerHTML = `<svg width="14" height="10"><use href="#eye"/></svg><svg width="15" height="15"><use href="#${type}"/></svg><span>${name}</span>`;
        treeList.appendChild(item);
    });

    // 视口栅格
    document.querySelectorAll('.grid').forEach(path => {
        const [x1, y1, x2, y2] = path.dataset.box.split(',').map(Number);
        const [ox, oy] = path.dataset.origin.split(',').map(Number);
        const step = Number(path.dataset.step);
        let d = '';
        for (let i = -60; i <= 60; i++) {
            const x = Math.round(ox + i * step);
            const y = Math.round(oy + i * step);
            if (x > x1 && x < x2) d += `M${x + 0.5} ${y1}V${y2}`;
            if (y > y1 && y < y2) d += `M${x1} ${y + 0.5}H${x2}`;
        }
        path.setAttribute('d', d);
    });

    // 时间刻度
    const ruler = document.getElementById('ruler');
    for (let i = 0; i <= 100; i++) {
        const tick = document.createElement('div');
        tick.className = i === 0 ? 'tick now' : 'tick';
        if (i % 5 === 0) tick.innerHTML = `<span>${i}</span>`;
        ruler.appendChild(tick);
    }
</script>
</body>
</html>
```
FILE: styles.css
```css
* {
	box-sizing: border-box;
}
body {
	margin: 0;
	background-color: #fff;
	color: #eee;
	font-family: "Noto Sans", "Noto Sans CJK SC", sans-serif;
	font-size: 12px;
	line-height: 16px;
}
button, input, select {
	font: inherit;
	color: inherit;
	border: none;
	background: none;
	padding: 0;
	margin: 0;
	border-radius: 0;
}
button {
	display: flex;
	align-items: center;
	justify-content: center;
	white-space: nowrap;
}
select {
	appearance: none;
	width: 100%;
	height: 100%;
	padding-left: 6px;
}
p, ul, h1 {
	margin: 0;
	padding: 0;
	list-style: none;
	font-weight: normal;
}
.defs {
	position: absolute;
}
.app {
	position: relative;
	display: flex;
	flex-direction: column;
	height: 100vh;
	padding-bottom: 2px;
	overflow: hidden;
	background: linear-gradient(#444, #444) top / 100% calc(100% - 2px) no-repeat;
}

/* 小三角 */
.tri, .tri-right {
	flex: none;
	width: 0;
	height: 0;
	border: 3px solid transparent;
}
.tri {
	border-top: 4px solid #444;
	border-bottom: 0;
}
.tri-right {
	border-left: 5px solid #444;
	border-right: 0;
}
.tri.light {
	border-top-color: #aaa;
}
.tri-right.light {
	border-left-color: #ddd;
}
.drop {
	position: relative;
	background-color: #606060;
}
.drop::after {
	content: "";
	position: absolute;
	right: 7px;
	top: 7px;
	border: 3px solid transparent;
	border-top: 5px solid #ddd;
	border-bottom: 0;
	pointer-events: none;
}

/* 标题栏 */
.title-bar {
	display: flex;
	flex: none;
	height: 24px;
	background-color: #fff;
	color: #111;
}
.app-button {
	position: relative;
	z-index: 2;
	flex: none;
	flex-direction: column;
	width: 41px;
	height: 41px;
	border: 1px solid #111;
	background: linear-gradient(#c4c4c4, #7c7c7c);
}
.app-button span {
	position: absolute;
	bottom: 0;
	font: bold 9px/12px "Liberation Sans", sans-serif;
}
.quick-access {
	display: flex;
	align-items: center;
	width: 320px;
	padding-left: 5px;
	background: linear-gradient(#b2b2b2, #808080);
}
.quick-access button {
	width: 24px;
	height: 24px;
}
.quick-access .tri {
	margin: 0 3px;
}
.workspace-drop {
	width: 129px;
	height: 20px;
	margin-left: 2px;
	background-color: #f4f4f4;
}
.workspace-drop::after {
	border-top: 3px solid #333;
	top: 9px;
}
.quick-access .qa-more {
	width: 16px;
}
.title {
	display: flex;
	flex: 1;
	justify-content: center;
	gap: 22px;
	padding-right: 5px;
	font-size: 12px;
	line-height: 24px;
}
.info-center {
	display: flex;
	align-items: center;
	width: 460px;
	padding-left: 4px;
	background: linear-gradient(#b2b2b2, #808080);
}
.info-center .tri-right {
	margin-right: 5px;
}
.info-center input {
	width: 180px;
	height: 21px;
	padding: 0 3px;
	border: 1px solid #111;
	background-color: #fff;
	font-size: 11px;
	font-style: italic;
}
.info-center input::placeholder {
	color: #555;
	opacity: 1;
}
.info-center button {
	width: 24px;
}
.info-center .sign-in {
	width: 84px;
	padding-left: 2px;
	justify-content: flex-start;
}
.info-center .exchange {
	width: 36px;
}
.help-mark {
	font: bold 13px "Liberation Sans", sans-serif;
	fill: #1f4fa8;
}
.window-buttons {
	display: flex;
	width: 163px;
	padding-left: 24px;
}
.window-buttons button {
	width: 46px;
}

/* 菜单栏 */
.menu-bar {
	display: flex;
	flex: none;
	gap: 22px;
	height: 21px;
	padding-left: 55px;
	border-top: 1px solid #333;
	background: linear-gradient(#a4a4a4, #555);
	color: #fff;
}
.menu-group {
	display: flex;
	gap: 25px;
}
.menu-group-tight {
	gap: 21px;
}

/* 主工具栏 */
.main-toolbar {
	display: flex;
	flex: none;
	height: 39px;
	border-bottom: 1px solid #222;
}
.tools {
	display: flex;
	padding: 4px 2px 4px 3px;
	border-right: 1px solid #111;
	border-left: 5px double #222;
}
.tools button {
	position: relative;
	width: 32px;
	height: 30px;
}
.tools svg {
	width: 23px;
	height: 23px;
}
.tools .on {
	border: 1px solid #444;
	border-radius: 3px;
	background-color: #5b88c4;
}
.flyout::after {
	content: "";
	position: absolute;
	right: 1px;
	bottom: 1px;
	border-left: 5px solid transparent;
	border-bottom: 5px solid #eee;
}
.sep {
	flex: none;
	width: 2px;
	height: 16px;
	margin: 7px 2px;
	background-color: #252525;
}
.filter-drop, .set-drop {
	width: 68px;
	height: 19px;
	margin: 1px;
	color: #ccc;
	font-size: 11px;
}
.set-drop {
	width: 118px;
}
.set-drop select {
	padding-left: 3px;
}

/* 功能区 */
.ribbon-tabs {
	display: flex;
	flex: none;
	align-items: center;
	height: 21px;
	padding: 1px 0 0 3px;
	border-top: 1px solid #666;
	border-left: 8px double #333;
	border-bottom: 1px solid #333;
	background-color: #535353;
	color: #b4b4b4;
}
.ribbon-tabs button {
	height: 18px;
	margin-left: 28px;
	margin-right: 24px;
}
.ribbon-tabs button + button {
	margin-left: 12px;
}
.ribbon-tabs button:nth-child(3), .ribbon-tabs button:nth-child(4) {
	margin-left: 28px;
}
.ribbon-tabs button.current {
	width: 57px;
	margin-right: 0;
	margin-left: 4px;
	padding-left: 16px;
	border: 1px solid #333;
	border-bottom: 0;
	background: linear-gradient(#777, #666);
	color: #eee;
}
.ribbon-tabs button.ribbon-toggle {
	margin: 0 8px 0 23px;
}
.ribbon-panels {
	display: flex;
	flex: none;
	height: 19px;
	padding-left: 4px;
	border-left: 8px double #333;
	border-bottom: 1px solid #2a2a2a;
	background: linear-gradient(#4a4a4a, #3a3a3a);
}
.ribbon-panels button {
	padding: 2px 5px 0;
	border-right: 1px solid #333;
	background-color: #484848;
}

/* 工作区 */
.workspace {
	display: grid;
	flex: 1;
	grid-template-columns: 40px 136px 1fr 200px;
	min-height: 0;
}
.dock {
	display: flex;
	flex-direction: column;
	justify-content: flex-end;
	gap: 11px;
	padding: 0 1px 2px 4px;
	background: linear-gradient(90deg, #343434, #2d2d2d);
}
.dock-play {
	width: 19px;
	height: 19px;
	margin-left: 6px;
	border-radius: 2px;
	background-color: #4a4a4a;
}
.dock-layout {
	height: 44px;
	border-radius: 3px;
	background: linear-gradient(#4d6a90, #3f7fe0);
}
.explorer {
	display: flex;
	flex-direction: column;
	min-height: 0;
	margin-top: 4px;
	border-top: 2px solid #222;
	border-right: 2px solid #191919;
}
.explorer-menu {
	display: flex;
	gap: 20px;
	height: 26px;
	padding: 2px 0 0 17px;
}
.more {
	height: 28px;
	padding-right: 7px;
	color: #5555b8;
	font-size: 14px;
	line-height: 12px;
	text-align: right;
}
.more-bottom {
	height: 30px;
}
.explorer-body {
	display: flex;
	flex: 1;
	min-height: 0;
}
.filters {
	display: flex;
	flex-direction: column;
	gap: 3px;
	width: 27px;
	padding: 3px 3px 0 2px;
}
.filters button {
	flex: none;
	height: 20px;
}
.filters .on {
	background-color: #5b88c4;
}
.filters svg {
	width: 18px;
	height: 18px;
}
.filters hr {
	width: 18px;
	margin: 1px auto;
	border: 0;
	border-top: 1px solid #888;
}
.tree {
	display: flex;
	flex: 1;
	flex-direction: column;
	min-width: 0;
	margin-right: 5px;
	overflow: hidden;
	border-left: 1px solid #3a3a3a;
}
.tree-head {
	height: 20px;
	padding-left: 2px;
	border-top: 1px solid #555;
	border-bottom: 1px solid #555;
	line-height: 19px;
	white-space: nowrap;
}
.tree ul {
	flex: 1;
	padding-top: 1px;
}
.tree li {
	display: flex;
	align-items: center;
	height: 18px;
	padding-left: 18px;
}
.tree li svg {
	flex: none;
}
.tree li span {
	flex: 1;
	margin-left: 2px;
	padding-left: 3px;
	overflow: hidden;
	background-color: #505050;
	line-height: 18px;
}
.tree .selected span {
	background-color: #777;
}
.h-scroll {
	display: flex;
	height: 17px;
	padding: 1px 0;
	background-color: #f0f0f0;
}
.h-scroll button {
	width: 17px;
}
.h-scroll span {
	width: 49px;
	margin-right: auto;
	background-color: #cdcdcd;
}

/* 视口 */
.center {
	display: flex;
	flex-direction: column;
	min-width: 0;
	min-height: 0;
	padding: 3px 5px 0 2px;
}
.viewports {
	display: grid;
	flex: 1;
	grid-template-columns: 1fr 1fr;
	grid-template-rows: 1fr 1fr;
	gap: 4px 5px;
	min-height: 0;
}
.viewport {
	position: relative;
	min-width: 0;
	min-height: 0;
	overflow: hidden;
}
.scene {
	display: block;
	width: 100%;
	height: 100%;
}
.vp-label {
	position: absolute;
	top: 7px;
	left: 5px;
	display: flex;
	gap: 7px;
	color: #ccc;
	font-size: 11px;
}
.field {
	fill: #373737;
}
.grid, .axis-line, .wire {
	fill: none;
	shape-rendering: crispEdges;
}
.grid {
	stroke: #5e5e5e;
}
.axis-line {
	stroke: #000;
}
.cube path {
	fill: #8f8f8f;
}
.cube text {
	fill: #686868;
	font-size: 16px;
	text-anchor: middle;
}
.cube .compass {
	fill: #aaa;
	font-size: 9px;
}
.cube .back {
	fill: #555;
}
.ax {
	font: 11px "Noto Sans", sans-serif;
}
.ax.r {
	fill: #a00;
}
.ax.g {
	fill: #090;
}
.ax.b {
	fill: #00b;
}
.ax.y {
	fill: #cc0;
}
.time-slider {
	display: flex;
	gap: 2px;
	height: 18px;
	padding: 1px 0;
}
.time-slider button {
	width: 14px;
	border-radius: 2px;
	background-color: #5c5c5c;
}
.time-slider .frame {
	width: 123px;
	background-color: #666;
}
.track-bar {
	display: flex;
	height: 27px;
	padding-right: 49px;
	border-top: 1px solid #111;
}
.mini-curve {
	width: 47px;
	padding-right: 10px;
}
.ruler {
	display: flex;
	flex: 1;
	background-color: #2b2b2b;
	color: #bbb;
	font-size: 11px;
}
.tick {
	display: flex;
	flex: 1 1 0;
	flex-direction: column;
	align-items: center;
	min-width: 0;
}
.tick::before {
	content: "";
	width: 1px;
	height: 12px;
	background-color: #777;
}
.tick span {
	line-height: 14px;
}
.now span, .now::before {
	width: 7px;
	background-color: #8d8220;
}

/* 命令面板 */
.panel {
	display: flex;
	flex-direction: column;
	min-height: 0;
	overflow: hidden;
	padding: 2px 5px 0;
	font-size: 11px;
}
.panel-tabs {
	display: grid;
	flex: none;
	grid-template-columns: repeat(6, 32px);
	height: 26px;
	margin: 0 -5px;
	background-color: #3b3b3b;
}
.panel-tabs button {
	margin-right: 2px;
	background-color: #404040;
}
.panel-tabs .current {
	background-color: #4b4b4b;
}
.panel-tabs svg {
	width: 18px;
	height: 18px;
}
.name-row {
	display: flex;
	flex: none;
	justify-content: space-between;
	height: 19px;
	margin: 7px 2px 0 1px;
}
.name-row input {
	width: 165px;
	padding-left: 2px;
	background-color: #646464;
}
.swatch {
	width: 17px;
	border: 1px solid #111;
	background-color: #f2ddc8;
}
.mod-drop {
	flex: none;
	height: 19px;
	margin: 11px 0 0 1px;
	font-size: 12px;
}
.mod-drop select {
	padding-left: 2px;
}
.stack {
	flex: none;
	height: 127px;
	margin: 6px 0 0 1px;
	border: 1px solid #fff;
}
.stack-item {
	justify-content: flex-start;
	width: 100%;
	height: 17px;
	padding-left: 7px;
	font-size: 12px;
	text-align: left;
}
.stack-item span {
	flex: 1;
	margin-left: 8px;
	padding-left: 2px;
	background-color: #5b88c4;
	line-height: 17px;
}
.stack-tools {
	display: flex;
	flex: none;
	align-items: center;
	height: 33px;
}
.stack-tools button {
	width: 24px;
}
.stack-tools svg {
	width: 16px;
	height: 16px;
}
.stack-tools i {
	width: 1px;
	height: 16px;
	margin: 0 5px;
	background-color: #181818;
}
.grip {
	display: flex;
	flex: none;
	align-items: center;
	justify-content: center;
	height: 20px;
	padding-top: 8px;
	background: linear-gradient(#666, #666) 0 14px / 100% 1px no-repeat;
}
.grip span {
	width: 16px;
	height: 4px;
	background: repeating-linear-gradient(90deg, #ccc 0 1px, #444 1px 2px);
}
.rollouts {
	display: flex;
	flex: none;
	flex-direction: column;
	gap: 4px;
	padding-right: 3px;
	border-right: 5px solid #505050;
}
.rollout {
	border: 1px solid #484848;
	background-color: #525252;
}
.roll-select {
	height: 238px;
}
.roll-head {
	position: relative;
	justify-content: flex-start;
	width: 100%;
	height: 17px;
	padding-left: 19px;
	font-weight: bold;
}
.roll-head::before {
	content: "";
	position: absolute;
	left: 6px;
	border: 3px solid transparent;
	border-left: 4px solid #bbb;
	border-right: 0;
}
.roll-head.open::before {
	border: 3px solid transparent;
	border-top: 4px solid #bbb;
	border-bottom: 0;
}
.roll-head::after {
	content: "";
	position: absolute;
	right: 7px;
	width: 6px;
	height: 6px;
	background: repeating-linear-gradient(#999 0 1px, transparent 1px 2px);
}
.roll-body {
	padding: 0 13px 0 18px;
}
.sub-objects {
	display: flex;
	align-items: center;
	height: 31px;
	padding-left: 9px;
}
.sub-objects button {
	width: 24px;
}
.sub-objects svg {
	width: 15px;
	height: 15px;
}
.check-row {
	display: flex;
	align-items: center;
	justify-content: space-between;
	height: 19px;
	color: #858585;
}
label {
	display: flex;
	align-items: center;
	white-space: nowrap;
}
input[type="checkbox"], input[type="radio"] {
	appearance: none;
	flex: none;
	width: 10px;
	height: 10px;
	margin-right: 4px;
	border: 1px solid #4a4a4a;
	background-color: #646464;
}
input[type="radio"] {
	margin-right: 9px;
	border-radius: 50%;
}
input[type="radio"]:checked {
	border: 2px solid #666;
	background-color: #eee;
}
.spin {
	position: relative;
	display: flex;
	width: 80px;
	height: 14px;
	border: 1px solid #484848;
}
.spin input {
	width: 100%;
	padding-left: 3px;
}
.spin::after, .spinner::after {
	content: "";
	position: absolute;
	right: 3px;
	top: 2px;
	width: 4px;
	height: 8px;
	background: radial-gradient(circle at 50% 20%, #aaa 1px, transparent 2px), radial-gradient(circle at 50% 80%, #aaa 1px, transparent 2px);
}
.pair {
	display: grid;
	grid-template-columns: 1fr 1fr;
	gap: 8px;
	margin-top: 3px;
}
.pair button, .wide {
	height: 18px;
	border: 1px solid #474747;
	border-radius: 2px;
	background-color: #626262;
}
.pair button:disabled {
	background-color: #565656;
	color: #858585;
}
.with-spin {
	display: flex;
	gap: 3px;
}
.with-spin button:first-child {
	flex: 1;
}
.spinner {
	position: relative;
	width: 12px;
	border: 1px solid #494949;
}
.pair + .pair {
	margin-top: 4px;
}
fieldset {
	margin: 2px 0 0 -9px;
	padding: 0 3px 0;
	border: 1px solid #3a3a3a;
}
legend {
	padding: 0 1px;
	margin-left: 2px;
	line-height: 16px;
}
.preview {
	display: flex;
	justify-content: space-between;
	height: 41px;
	padding-bottom: 4px;
}
.off {
	color: #858585;
}
.sel-info {
	margin-top: 6px;
	padding-right: 6px;
	text-align: right;
}
.roll-edit .roll-body {
	padding: 3px 17px 0 16px;
}
.wide {
	width: 100%;
}
.constraints {
	display: grid;
	grid-template-columns: 60px 1fr;
	height: 56px;
	margin: 6px -3px 0 -2px;
	padding: 0 9px 4px;
}
.keep-uv {
	display: flex;
	align-items: center;
	justify-content: space-between;
	height: 22px;
	padding: 0 34px 0 11px;
}
.box-btn {
	width: 12px;
	height: 12px;
	border: 1px solid #111;
	border-top: 3px solid #111;
	background-color: #666;
}
.pair .box-btn {
	width: 12px;
	height: 12px;
	margin-top: 3px;
	border: 1px solid #111;
	border-top: 3px solid #111;
}
.roll-edit .pair {
	margin-top: 2px;
}
.roll-edit .pair + .pair {
	margin-top: 5px;
}

/* 状态栏 */
.status-bar {
	display: flex;
	flex: none;
	height: 50px;
	background-color: #444;
	font-size: 11px;
}
.script-box {
	width: 105px;
	padding: 2px 6px 2px 0;
	border-right: 1px solid #222;
}
.macro, .listener {
	height: 22px;
	border: 2px solid #fff;
	border-top-color: #777;
	border-left-color: #777;
	background-color: #dcc3c3;
}
.listener {
	height: 24px;
	padding-left: 3px;
	overflow: hidden;
	background-color: #fff;
	color: #000;
	font: 11px/20px "Liberation Mono", "Noto Sans CJK SC", monospace;
	white-space: nowrap;
}
.messages {
	flex: 1;
	padding: 8px 0 0 4px;
}
.messages p {
	height: 25px;
}
.coords {
	width: 896px;
}
.coord-row, .tag-row {
	display: flex;
	align-items: center;
	height: 29px;
}
.coord-row button {
	width: 27px;
}
.coord-row svg, .tag-row svg {
	width: 15px;
	height: 15px;
}
.coord-row label {
	gap: 2px;
	width: 84px;
	justify-content: space-between;
	padding-right: 2px;
}
.coord-row .spin {
	width: 68px;
	height: 18px;
	border: 0;
	background-color: #626262;
}
.coord-row .spin::after {
	top: 5px;
}
.coord-row > span {
	margin-left: 3px;
}
.tag-row {
	height: 21px;
	padding-left: 309px;
	gap: 7px;
	color: #bbb;
}
.tag-row button {
	width: 20px;
	height: 20px;
	border-radius: 2px;
	background-color: #5b88c4;
}

/* 任务栏 */
.task-bar {
	display: flex;
	flex: none;
	height: 40px;
	background: linear-gradient(90deg, #2c3020, #343621 50%, #3b3823);
}
.task-bar button {
	width: 49px;
}
.task-bar button svg {
	width: 24px;
	height: 24px;
}
.task-bar .start {
	width: 48px;
	background-color: #1d2622;
}
.task-bar .start svg {
	width: 16px;
	height: 16px;
}
.search {
	gap: 10px;
	width: 343px;
	padding-left: 11px;
	border: 1px solid #ccc;
	background-color: #f2f2f2;
}
.search input {
	flex: 1;
	color: #222;
	font-size: 14px;
}
.search input::placeholder {
	color: #222;
	opacity: 1;
}
.running {
	background: linear-gradient(#76b9ed, #76b9ed) bottom / 40px 2px no-repeat;
}
.running.active {
	background: linear-gradient(#76b9ed, #76b9ed) bottom / 49px 2px no-repeat #61614f;
}
.you {
	font: bold 6px "Liberation Sans", sans-serif;
	fill: #e03;
}

/* 站点标识 */
.watermark {
	position: absolute;
	right: 0;
	bottom: 2px;
	display: flex;
	align-items: center;
	width: 509px;
	height: 252px;
	padding-left: 46px;
	background-color: #fff;
	color: #0a0a0a;
}
.mark-text {
	display: flex;
	flex-direction: column;
	padding-top: 7px;
	white-space: nowrap;
}
.mark-text strong {
	font: italic 900 55px/52px "Noto Sans CJK SC", sans-serif;
}
.mark-text span {
	font: italic 600 36px/36px "Open Sans", sans-serif;
}
```
